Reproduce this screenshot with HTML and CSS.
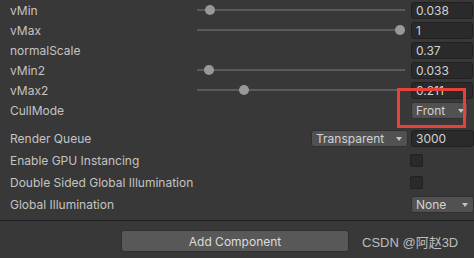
FILE: index.html
```html
<!DOCTYPE html>
<html lang="en">
<head>
    <meta charset="UTF-8">
    <title>Material Inspector</title>
    <link rel="stylesheet" href="styles.css">
</head>
<body>
<div class="inspector">
    <div class="props">
        <div class="row">
            <span class="label">vMin</span>
            <div class="slider"><div class="track"></div><div class="rail"><div class="knob" style="left: 3.8%"></div></div></div>
            <div class="field">0.038</div>
        </div>
        <div class="row">
            <span class="label">vMax</span>
            <div class="slider"><div class="track"></div><div class="rail"><div class="knob" style="left: 100%"></div></div></div>
            <div class="field">1</div>
        </div>
        <div class="row">
            <span class="label">normalScale</span>
            <div class="field">0.37</div>
        </div>
        <div class="row">
            <span class="label">vMin2</span>
            <div class="slider"><div class="track"></div><div class="rail"><div class="knob" style="left: 3.3%"></div></div></div>
            <div class="field">0.033</div>
        </div>
        <div class="row">
            <span class="label">vMax2</span>
            <div class="slider"><div class="track"></div><div class="rail"><div class="knob" style="left: 21.1%"></div></div></div>
            <div class="field">0.211</div>
        </div>
        <div class="row">
            <span class="label">CullMode</span>
            <div class="dropdown cull">Front<span class="arrow"></span></div>
            <div class="highlight"></div>
        </div>
    </div>

    <div class="props wide">
        <div class="row">
            <span class="label">Render Queue</span>
            <div class="dropdown queue">Transparent<span class="arrow"></span></div>
            <div class="field">3000</div>
        </div>
        <div class="row">
            <span class="label">Enable GPU Instancing</span>
            <div class="checkbox"></div>
        </div>
        <div class="row">
            <span class="label">Double Sided Global Illumination</span>
            <div class="checkbox"></div>
        </div>
        <div class="row">
            <span class="label">Global Illumination</span>
            <div class="dropdown gi">None<span class="arrow"></span></div>
        </div>
    </div>

    <div class="footer">
        <button class="add-btn">Add Component</button>
        <span class="watermark">CSDN @阿赵3D</span>
    </div>
</div>
</body>
</html>
```

FILE: styles.css
```css
body {
    margin: 0;
    background: #383838;
    font-family: Inter, 'Noto Sans', sans-serif;
    font-size: 12px;
    color: #c4c4c4;
}
.inspector {
    width: 474px;
    height: 258px;
    overflow: hidden;
}
.props {
    position: relative;
}
.row {
    display: flex;
    align-items: center;
    height: 20px;
    padding-left: 10px;
    padding-right: 1px;
}
.wide {
    margin-top: 7px;
}
.wide .row {
    height: 22px;
}
.label {
    flex: 1;
    white-space: nowrap;
}
.row:has(.slider) .label {
    flex: 0 0 187px;
}
.slider {
    position: relative;
    width: 208px;
    height: 10px;
    margin-right: 6px;
}
.track {
    position: absolute;
    left: 0;
    right: 0;
    top: 4px;
    height: 2px;
    background: #5b5b5b;
}
.rail {
    position: relative;
    margin-right: 10px;
    height: 10px;
}
.knob {
    position: absolute;
    top: 0;
    width: 10px;
    height: 10px;
    border-radius: 50%;
    background: #999999;
}
.field {
    box-sizing: border-box;
    width: 62px;
    height: 17px;
    padding: 0 4px;
    line-height: 15px;
    background: #2a2a2a;
    border: 1px solid #212121;
    border-radius: 3px;
    color: #d2d2d2;
    font-size: 12px;
}
.wide .field {
    width: 63px;
    margin-right: -1px;
}
.dropdown {
    box-sizing: border-box;
    position: relative;
    height: 17px;
    padding: 0 4px;
    line-height: 15px;
    background: #515151;
    border: 1px solid #303030;
    border-radius: 3px;
    color: #d2d2d2;
}
.arrow {
    position: absolute;
    right: 5px;
    top: 6px;
    width: 0;
    height: 0;
    border-left: 3px solid transparent;
    border-right: 3px solid transparent;
    border-top: 4px solid #c4c4c4;
}
.cull {
    width: 57px;
    margin-right: 5px;
}
.cull .arrow {
    right: 3px;
}
.queue {
    width: 97px;
    margin-right: 3px;
}
.gi {
    width: 63px;
    margin-right: -1px;
}
.checkbox {
    box-sizing: border-box;
    width: 13px;
    height: 13px;
    margin-right: 50px;
    background: #2a2a2a;
    border: 1px solid #212121;
    border-radius: 2px;
}
.highlight {
    position: absolute;
    left: 397px;
    top: 88px;
    width: 69px;
    height: 40px;
    box-sizing: border-box;
    border: 3px solid #e8413c;
}
.footer {
    margin-top: 5px;
    border-top: 1px solid #1f1f1f;
    display: flex;
    align-items: center;
    padding: 9px 0 0 121px;
}
.add-btn {
    box-sizing: border-box;
    width: 228px;
    height: 22px;
    background: #585858;
    border: 1px solid #303030;
    border-radius: 3px;
    color: #dcdcdc;
    font-family: Inter, 'Noto Sans', sans-serif;
    font-size: 12px;
    padding: 0;
}
.watermark {
    margin-left: 13px;
    font-family: 'Liberation Sans', 'Noto Sans CJK SC', sans-serif;
    font-size: 13px;
    color: #bdbdbd;
}
```
